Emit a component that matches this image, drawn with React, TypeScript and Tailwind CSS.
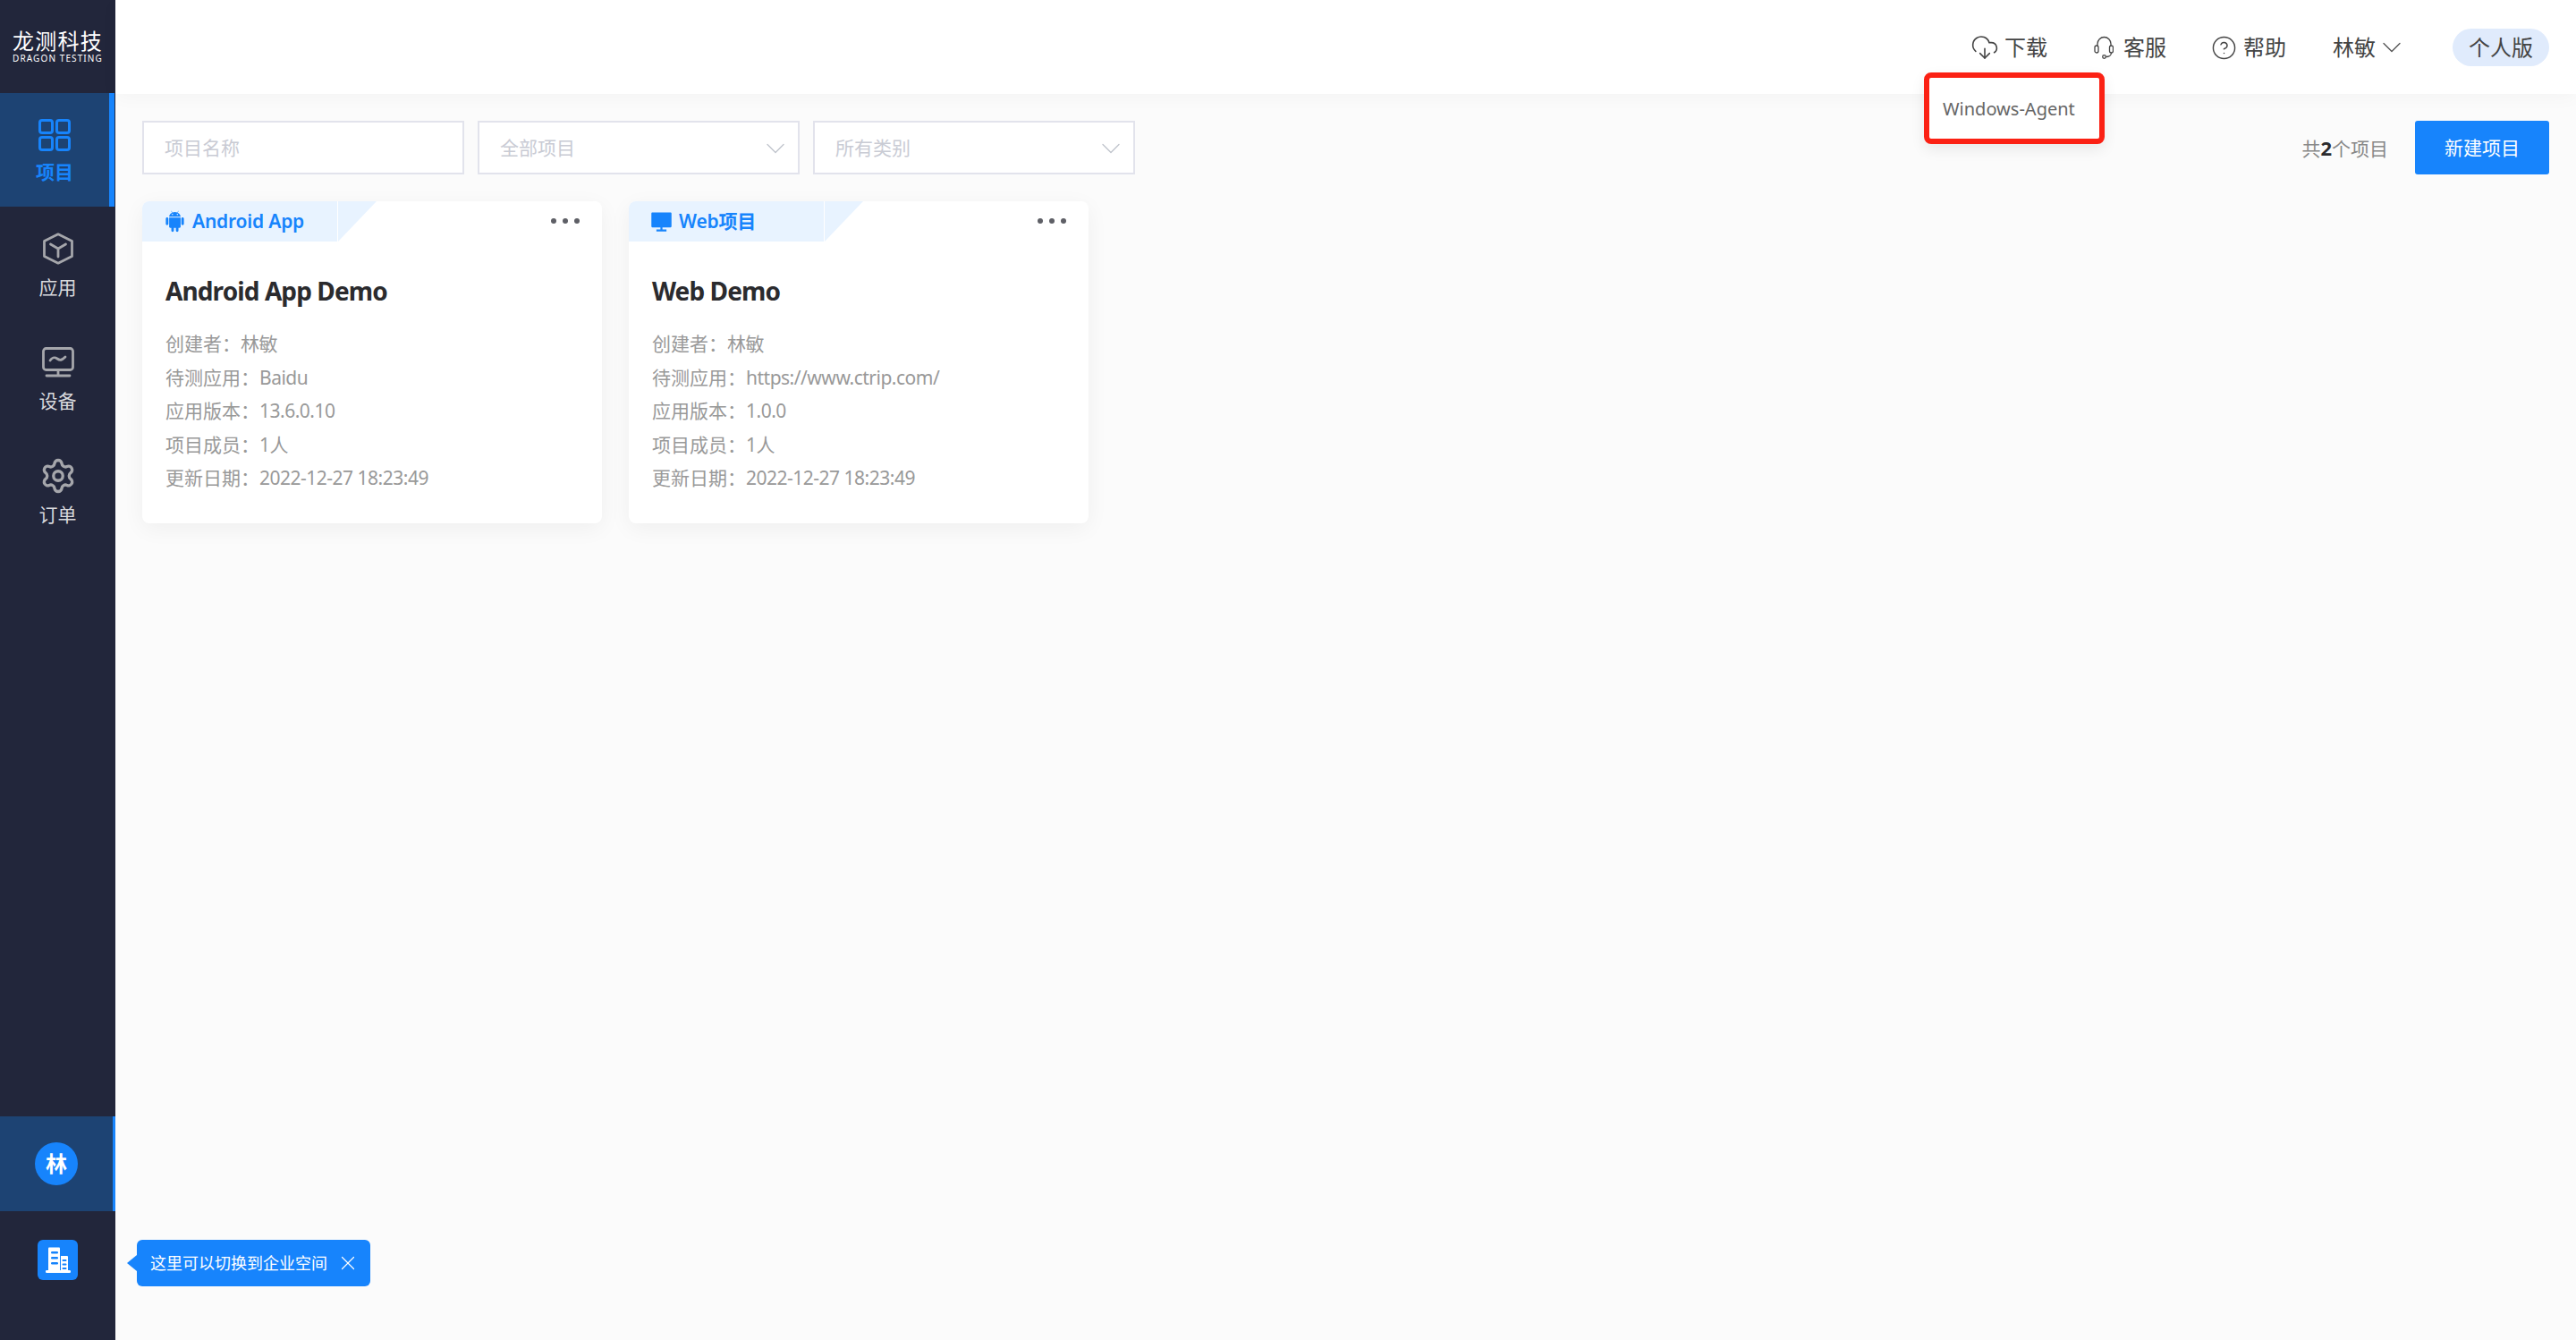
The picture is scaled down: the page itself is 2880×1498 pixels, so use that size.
import { AiFillAndroid } from "react-icons/ai";
import { RiComputerFill } from "react-icons/ri";
import { ChevronDown, CircleHelp, CloudDownload, Settings, X } from "lucide-react";

const font = "font-['Noto_Sans','Noto_Sans_CJK_SC',sans-serif]";

const ProjectIcon = () => (
  <svg width="36" height="36" viewBox="0 0 36 36" fill="none" stroke="#1784fc" strokeWidth="3">
    <rect x="1.5" y="1.5" width="14" height="14" rx="2.5" />
    <rect x="20.5" y="1.5" width="14" height="14" rx="2.5" />
    <rect x="1.5" y="20.5" width="14" height="14" rx="2.5" />
    <rect x="20.5" y="20.5" width="14" height="14" rx="2.5" />
  </svg>
);

const CubeIcon = () => (
  <svg width="36" height="36" viewBox="0 0 36 36" fill="none" stroke="#a5a6ab" strokeWidth="2.8" strokeLinejoin="round">
    <path d="M18 1.8 33.5 9.6v16.8L18 34.2 2.500 26.400V9.600z" />
    <path d="M9.500 13 18 18l8.500-5M18 18v9" strokeLinecap="round" />
  </svg>
);

const DeviceIcon = () => (
  <svg width="36" height="34" viewBox="0 0 36 34" fill="none" stroke="#a5a6ab" strokeWidth="2.800" strokeLinecap="round" strokeLinejoin="round">
    <rect x="1.500" y="1.500" width="33" height="24" rx="3" />
    <path d="M9 15c3-4 5-4 8-2s5 2 9-2" />
    <path d="M5 32h26" />
    <path d="M18 26v5" />
  </svg>
);

const HeadsetIcon = () => (
  <svg width="22" height="26" viewBox="0 0 22 26" fill="none" stroke="#444" strokeWidth="1.300">
    <path d="M4 11V9a7.500 7.500 0 0 1 15 0v2" />
    <rect x="1" y="11" width="4" height="8" rx="2" />
    <rect x="17.500" y="11" width="4" height="8" rx="2" />
    <path d="M19.500 19c0 3-3 4.500-6 4.500" />
    <circle cx="11.500" cy="23.500" r="1.800" />
  </svg>
);

const BuildingIcon = () => (
  <svg width="30" height="30" viewBox="0 0 30 30" fill="#fff">
    <path d="M4 1.500a1 1 0 0 1 1-1h11a1 1 0 0 1 1 1V27H4z" />
    <path d="M18 10h7a1 1 0 0 1 1 1v16h-8z" />
    <rect x="1" y="26" width="28" height="3" rx="1.200" />
    <g fill="#1784fc">
      <rect x="7" y="5" width="8" height="2.500" rx="1.200" />
      <rect x="7" y="11" width="8" height="2.500" rx="1.200" />
      <rect x="7" y="17" width="8" height="2.500" rx="1.200" />
      <rect x="19.500" y="14" width="5" height="2" rx="1" />
      <rect x="19.500" y="18.500" width="5" height="2" rx="1" />
      <rect x="19.500" y="23" width="5" height="2" rx="1" />
    </g>
  </svg>
);

const NavItem = ({ icon, label }: { icon: React.ReactNode; label: string }) => (
  <div className="h-[127px] flex flex-col items-center pt-[29px]">
    <div className="h-[36px] flex items-center justify-center">{icon}</div>
    <span className="mt-[10px] text-[21px] leading-[30px] text-[#d9dade]">{label}</span>
  </div>
);

const Sidebar = () => (
  <aside className="w-[129px] shrink-0 h-full bg-[#22263b] flex flex-col">
    {/* LOGO */}
    <div className="h-[104px] flex flex-col items-center pt-[33px] text-white">
      <span className="text-[24px] leading-[26px] tracking-[1.2px]">龙测科技</span>
      <span className="text-[10px] leading-[12px] tracking-[1.1px] whitespace-nowrap">DRAGON TESTING</span>
    </div>

    <div className="h-[127px] bg-[#1d4373] border-r-[6px] border-[#1784fc] mr-[1px] flex flex-col items-center pt-[29px]">
      <ProjectIcon />
      <span className="mt-[8px] text-[21px] leading-[30px] font-bold text-[#1784fc]">项目</span>
    </div>
    <NavItem icon={<CubeIcon />} label="应用" />
    <NavItem icon={<DeviceIcon />} label="设备" />
    <NavItem icon={<Settings size={42} strokeWidth={1.9} color="#a5a6ab" />} label="订单" />

    {/* BOTTOM */}
    <div className="mt-auto h-[106px] bg-[#1d4373] border-r-[3px] border-[#1784fc] flex items-center pl-[39px]">
      <div className="w-[48px] h-[48px] rounded-full bg-[#1784fc] flex items-center justify-center text-white text-[24px] font-bold">
        林
      </div>
    </div>
    <div className="h-[144px] pt-[32px] pl-[42px]">
      <div className="w-[45px] h-[45px] rounded-[6px] bg-[#1784fc] flex items-center justify-center">
        <BuildingIcon />
      </div>
    </div>
  </aside>
);

const Header = () => (
  <header className="relative h-[105px] shrink-0 bg-white shadow-[0_4px_20px_rgba(0,0,0,0.03)] flex items-center justify-end pr-[30px] text-[24px] text-[#444]">
    <div className="flex items-center h-[42px] pt-[1px]">
      <div className="flex items-center gap-[6px]">
        <CloudDownload size={32} strokeWidth={1.2} color="#444" />
        <span>下载</span>
      </div>
      <div className="flex items-center gap-[11px] ml-[52px]">
        <HeadsetIcon />
        <span>客服</span>
      </div>
      <div className="flex items-center gap-[7px] ml-[50px]">
        <CircleHelp size={29} strokeWidth={1.2} color="#444" />
        <span>帮助</span>
      </div>
      <div className="flex items-center ml-[52px]">
        <span>林敏</span>
        <ChevronDown size={36} strokeWidth={0.9} color="#555" />
      </div>
      <div className="ml-[50px] w-[108px] h-[42px] rounded-full bg-[#e0ebfc] flex items-center justify-center">个人版</div>
    </div>
    {/* DOWNLOAD POPUP */}
    <div className="absolute left-[2022px] top-[81px] w-[202px] h-[80px] z-10 bg-white border-[6px] border-[#fb2114] rounded-[8px] shadow-[0_6px_16px_rgba(0,0,0,0.08)] flex items-center pl-[15px] pt-[2px] text-[20px] text-[#666]">
      Windows-Agent
    </div>
  </header>
);

const Select = ({ label }: { label: string }) => (
  <div className="w-[360px] h-[60px] bg-white border-2 border-[#e2e3ec] flex items-center justify-between pl-[23px] pr-[7px] pt-[2px] text-[21px] text-[#c9cbd4]">
    <span>{label}</span>
    <ChevronDown size={36} strokeWidth={0.9} color="#c0c4cc" />
  </div>
);

const ProjectCard = ({
  icon,
  tag,
  name,
  rows,
}: {
  icon: React.ReactNode;
  tag: string;
  name: string;
  rows: string[][];
}) => (
  <div className="w-[514px] h-[360px] bg-white rounded-[8px] shadow-[0_6px_24px_rgba(0,0,0,0.05)] overflow-hidden">
    <div className="flex items-start justify-between h-[45px]">
      <div className="flex h-[45px]">
        <div className="w-[218px] h-full bg-[#e8f3ff] flex items-center pl-[23px] gap-[6px] text-[21px] font-semibold tracking-[-0.2px] text-[#1784fc]">
          {icon}
          <span>{tag}</span>
        </div>
        <div className="w-[43px] h-full ml-[1px] bg-[#e8f3ff] [clip-path:polygon(0_0,100%_0,0_100%)]" />
      </div>
      <div className="flex gap-[7px] pt-[19px] pr-[25px]">
        <span className="w-[6px] h-[6px] rounded-full bg-[#5e5f66]" />
        <span className="w-[6px] h-[6px] rounded-full bg-[#5e5f66]" />
        <span className="w-[6px] h-[6px] rounded-full bg-[#5e5f66]" />
      </div>
    </div>
    <div className="pl-[26px]">
      <h3 className="mt-[36px] text-[28px] leading-[38px] font-bold tracking-[-0.9px] text-[#2b2b2e]">{name}</h3>
      <div className="mt-[22px] text-[21px] leading-[37.500px] text-[#999]">
        {rows.map(([k, v]) => (
          <p key={k} className="whitespace-nowrap">
            {k}：<span className="tracking-[-0.5px]">{v}</span>
          </p>
        ))}
      </div>
    </div>
  </div>
);

export default function App() {
  return (
    <div className={`relative w-full h-[1498px] flex bg-[#fbfbfb] overflow-hidden ${font}`}>
      <Sidebar />

      <main className="flex-1 flex flex-col">
        <Header />

        <div className="pl-[30px] pr-[30px]">
          {/* FILTERS */}
          <div className="flex items-center mt-[30px]">
            <div className="w-[360px] h-[60px] bg-white border-2 border-[#e2e3ec] flex items-center pl-[23px] pt-[2px] text-[21px] text-[#c9cbd4]">
              项目名称
            </div>
            <div className="ml-[15px]">
              <Select label="全部项目" />
            </div>
            <div className="ml-[15px]">
              <Select label="所有类别" />
            </div>
            <div className="ml-auto flex items-center gap-[30px]">
              <span className="text-[21px] text-[#888] pt-[2px]">
                共<b className="text-[22px] text-[#2b2b2e]">2</b>个项目
              </span>
              <button className="w-[150px] h-[60px] pt-[2px] rounded-[3px] bg-[#1784fc] text-white text-[21px]">新建项目</button>
            </div>
          </div>

          {/* CARDS */}
          <div className="flex gap-[30px] mt-[30px]">
            <ProjectCard
              icon={<AiFillAndroid size={27} />}
              tag="Android App"
              name="Android App Demo"
              rows={[
                ["创建者", "林敏"],
                ["待测应用", "Baidu"],
                ["应用版本", "13.6.0.10"],
                ["项目成员", "1人"],
                ["更新日期", "2022-12-27 18:23:49"],
              ]}
            />
            <ProjectCard
              icon={<RiComputerFill size={27} />}
              tag="Web项目"
              name="Web Demo"
              rows={[
                ["创建者", "林敏"],
                ["待测应用", "https://www.ctrip.com/"],
                ["应用版本", "1.0.0"],
                ["项目成员", "1人"],
                ["更新日期", "2022-12-27 18:23:49"],
              ]}
            />
          </div>
        </div>
      </main>

      {/* SPACE TOOLTIP */}
      <div className="absolute left-[153px] top-[1386px] w-[261px] h-[52px] rounded-[6px] bg-[#1784fc] flex items-center pl-[15px] text-[18px] text-white whitespace-nowrap">
        <span className="absolute left-[-11px] top-[17px] w-0 h-0 border-y-[9px] border-y-transparent border-r-[11px] border-r-[#1784fc]" />
        这里可以切换到企业空间
        <X size={26} strokeWidth={1.1} className="ml-[10px]" />
      </div>
    </div>
  );
}
